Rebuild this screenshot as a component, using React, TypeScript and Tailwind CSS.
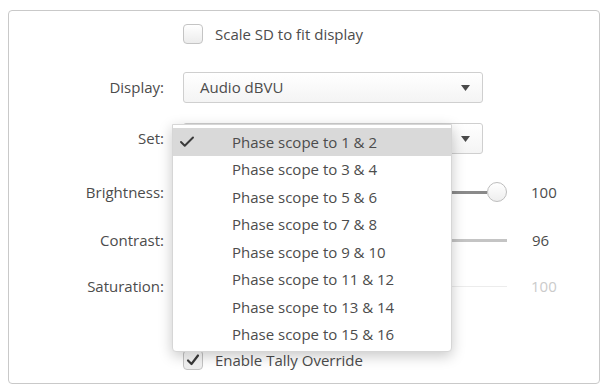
import { Check } from 'lucide-react';

const phaseItems = [
  'Phase scope to 1 & 2',
  'Phase scope to 3 & 4',
  'Phase scope to 5 & 6',
  'Phase scope to 7 & 8',
  'Phase scope to 9 & 10',
  'Phase scope to 11 & 12',
  'Phase scope to 13 & 14',
  'Phase scope to 15 & 16',
];

function Arrow() {
  return (
    <svg width="9" height="6" viewBox="0 0 9 6" className="shrink-0">
      <path d="M0 0 L9 0 L4.5 6 Z" fill="#4a4a4a" />
    </svg>
  );
}

function Checkbox({ checked }: { checked?: boolean }) {
  return (
    <div className="w-[20px] h-[20px] rounded-[4px] border border-[#c4c4c4] bg-gradient-to-b from-white to-[#ececec] flex items-center justify-center shrink-0">
      {checked && (
        <svg width="14" height="14" viewBox="0 0 14 14">
          <path d="M2 7.5 L5.5 11 L12 2.5" fill="none" stroke="#3a3a3a" strokeWidth="2.2" strokeLinecap="round" strokeLinejoin="round" />
        </svg>
      )}
    </div>
  );
}

function SelectBox({ value }: { value?: string }) {
  return (
    <div className="w-[300px] h-[31px] rounded-[3px] border border-[#cfcfcf] bg-gradient-to-b from-white to-[#f4f4f4] flex items-center justify-between pl-[16px] pr-[12px]">
      <span>{value}</span>
      <Arrow />
    </div>
  );
}

function Row({ label, children, className }: { label?: string; children: React.ReactNode; className?: string }) {
  return (
    <div className={`flex items-center ${className ?? ''}`}>
      <div className="w-[155px] text-right">{label}</div>
      <div className="ml-[19px] flex items-center">{children}</div>
    </div>
  );
}

export default function App() {
  return (
    <div
      className="relative w-[603px] h-[384px] overflow-hidden bg-white text-[15px] text-[#4c4c4c]"
      style={{ fontFamily: '"Open Sans", "DejaVu Sans", sans-serif' }}
    >
      {/* Panel */}
      <div className="ml-[8px] mt-[10px] w-[592px] h-[374px] rounded-[4px] border border-[#c9c9c9] flex flex-col">
        <Row className="mt-[13px] h-[20px]">
          <Checkbox />
          <span className="ml-[12px]">Scale SD to fit display</span>
        </Row>
        <Row label="Display:" className="mt-[28px]">
          <SelectBox value="Audio dBVU" />
        </Row>
        <Row label="Set:" className="mt-[20px]">
          <SelectBox />
        </Row>
        <Row label="Brightness:" className="mt-[28px] h-[20px]">
          <div className="w-[324px] flex items-center">
            <div className="flex-1 h-[3px] bg-[#8a8a8a]" />
            <div className="w-[20px] h-[20px] rounded-full border border-[#bdbdbd] bg-gradient-to-b from-white to-[#eeeeee]" />
          </div>
          <span className="ml-[24px]">100</span>
        </Row>
        <Row label="Contrast:" className="mt-[28px] h-[20px]">
          <div className="w-[324px] h-[3px] bg-[#c4c4c4]" />
          <span className="ml-[25px]">96</span>
        </Row>
        <Row label="Saturation:" className="mt-[26px] h-[20px]">
          <div className="w-[324px] h-[1px] bg-[#ececec]" />
          <span className="ml-[24px] text-[#cbcbcb]">100</span>
        </Row>
        <Row className="mt-[54px] h-[20px]">
          <Checkbox checked />
          <span className="ml-[12px]">Enable Tally Override</span>
        </Row>
      </div>

      {/* Open dropdown menu */}
      <div className="absolute left-[172px] top-[124px] w-[280px] bg-white border border-[#d6d6d6] rounded-b-[4px] py-[3px] shadow-[0_4px_14px_rgba(0,0,0,0.22)]">
        {phaseItems.map((item, i) => (
          <div key={item} className={`h-[27.5px] flex items-center ${i === 0 ? 'bg-[#d9d9d9]' : ''}`}>
            <div className="w-[59px] pl-[5px] flex items-center">
              {i === 0 && <Check size={18} strokeWidth={2.6} className="text-[#3a3a3a]" />}
            </div>
            <span>{item}</span>
          </div>
        ))}
      </div>
    </div>
  );
}
